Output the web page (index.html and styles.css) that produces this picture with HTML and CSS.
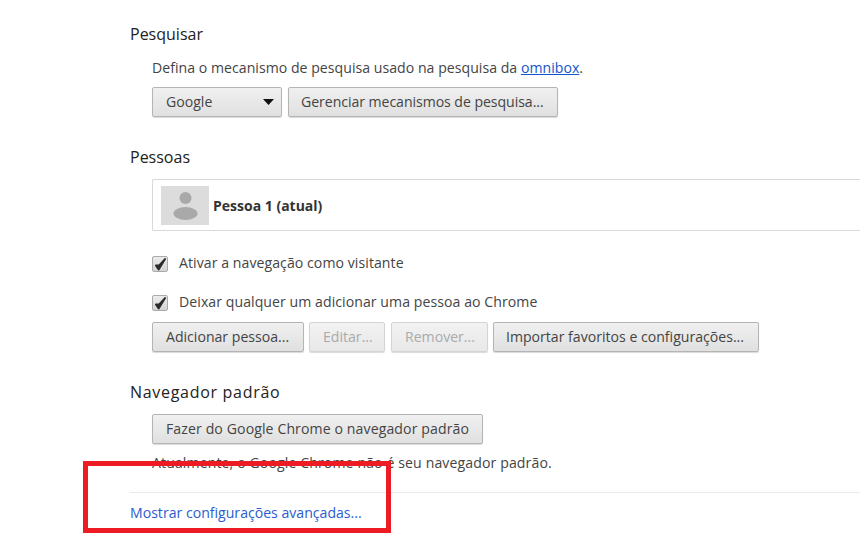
FILE: index.html
```html
<!DOCTYPE html>
<html lang="pt">
<head>
<meta charset="utf-8">
<title>Configurações</title>
<link rel="stylesheet" href="styles.css">
</head>
<body>
<main class="page">
  <section class="search">
    <h3>Pesquisar</h3>
    <div class="indent">
      <p class="desc">Defina o mecanismo de pesquisa usado na pesquisa da <a href="#">omnibox</a>.</p>
      <div class="row">
        <div class="btn select">Google<svg class="arrow" width="11" height="6" viewBox="0 0 11 6"><path d="M0 0h11L5.5 6z" fill="#111"/></svg></div>
        <div class="btn manage">Gerenciar mecanismos de pesquisa...</div>
      </div>
    </div>
  </section>
  <section class="people">
    <h3>Pessoas</h3>
    <div class="indent">
      <div class="person">
        <svg class="avatar" width="48" height="39" viewBox="0 0 48 39"><rect width="48" height="39" fill="#dcdcdc"/><circle cx="24.500" cy="12" r="6" fill="#a9a9a9"/><ellipse cx="24.500" cy="27.500" rx="12" ry="6.500" fill="#a9a9a9"/></svg>
        <strong>Pessoa 1 (atual)</strong>
      </div>
      <label class="check first"><span class="box"><svg width="13" height="13" viewBox="0 0 12 12"><path d="M1.800 6.800 4.300 10.500 10.200 1 4.800 6.800z" fill="#2a2a2a" stroke="#2a2a2a" stroke-width="1.800" stroke-linejoin="round"/></svg></span>Ativar a navegação como visitante</label>
      <label class="check second"><span class="box"><svg width="13" height="13" viewBox="0 0 12 12"><path d="M1.800 6.800 4.300 10.500 10.200 1 4.800 6.800z" fill="#2a2a2a" stroke="#2a2a2a" stroke-width="1.800" stroke-linejoin="round"/></svg></span>Deixar qualquer um adicionar uma pessoa ao Chrome</label>
      <div class="row people-buttons">
        <div class="btn add">Adicionar pessoa...</div>
        <div class="btn disabled edit">Editar...</div>
        <div class="btn disabled remove">Remover...</div>
        <div class="btn import">Importar favoritos e configurações...</div>
      </div>
    </div>
  </section>
  <section class="browser">
    <h3>Navegador padrão</h3>
    <div class="indent">
      <div class="btn make-default">Fazer do Google Chrome o navegador padrão</div>
      <p class="status">Atualmente, o Google Chrome não é seu navegador padrão.</p>
    </div>
  </section>
  <footer class="advanced"><a href="#">Mostrar configurações avançadas...</a></footer>
</main>
<div class="highlight"></div>
</body>
</html>
```

FILE: styles.css
```css
* { box-sizing: border-box; }
html, body { margin: 0; height: 536px; overflow: hidden; background: #fff; }
body { font-family: "Open Sans", "Noto Sans", sans-serif; font-size: 14.100px; color: #444; position: relative; }
.page { padding: 24px 0 0 130px; }
h3 { margin: 0; height: 20px; font-size: 16px; line-height: 20px; font-weight: 400; color: #222; }
.indent { padding-left: 22px; }
.desc { margin: 15px 0 0; height: 18px; line-height: 18px; letter-spacing: .03px; }
.desc a { color: #15c; text-decoration: underline; }
.row { display: flex; gap: 6px; margin-top: 10px; }
.btn { height: 30px; display: flex; align-items: center; padding: 0 13px 2px; border: 1px solid #b4b4b4; border-radius: 2px; background: linear-gradient(#f0f0f0, #e0e0e0); box-shadow: 0 1px 1px rgba(0,0,0,.15); color: #444; white-space: nowrap; flex: none; }
.select { width: 130px; justify-content: space-between; padding-right: 7px; }
.arrow { margin-top: 2px; }
.manage { width: 270px; padding-left: 12px; letter-spacing: -.05px; }
.people { margin-top: 30px; }
.person { margin-top: 12px; height: 52px; border: 1px solid #d9d9d9; border-right: 0; border-radius: 2px 0 0 2px; padding-left: 8px; display: flex; align-items: center; gap: 4px; }
.person strong { color: #333; font-weight: 700; font-size: 14px; }
.avatar { display: block; flex: none; }
.check { display: flex; align-items: flex-start; height: 18px; gap: 11px; line-height: 16px; letter-spacing: .06px; }
.first { margin-top: 24px; }
.second { margin-top: 21px; }
.box { width: 16px; height: 16px; margin-top: 1px; border: 1px solid #aaa; border-radius: 2px; background: linear-gradient(#ececec, #d4d4d4); display: flex; align-items: center; justify-content: center; flex: none; }
.people-buttons { gap: 5px; margin-top: 10px; }
.add { width: 152px; }
.edit { width: 76px; margin-right: 1px; }
.remove { width: 97px; }
.import { width: 266px; padding-left: 12px; }
.disabled { color: #aaa; background: linear-gradient(#f2f2f2, #e8e8e8); border-color: #d4d4d4; }
.browser { margin-top: 30px; }
.browser h3 { letter-spacing: .7px; }
.make-default { width: 331px; margin-top: 12px; letter-spacing: .1px; }
.status { margin: 10px 0 0; height: 18px; line-height: 18px; letter-spacing: .11px; }
.advanced { margin-top: 20px; padding-top: 11px; border-top: 1px solid #eaeaea; height: 40px; line-height: 18px; }
.advanced a { color: #2a5ccf; text-decoration: none; }
.highlight { position: absolute; left: 83px; top: 461px; width: 308px; height: 72px; border: 5px solid #ed1c24; }
```
